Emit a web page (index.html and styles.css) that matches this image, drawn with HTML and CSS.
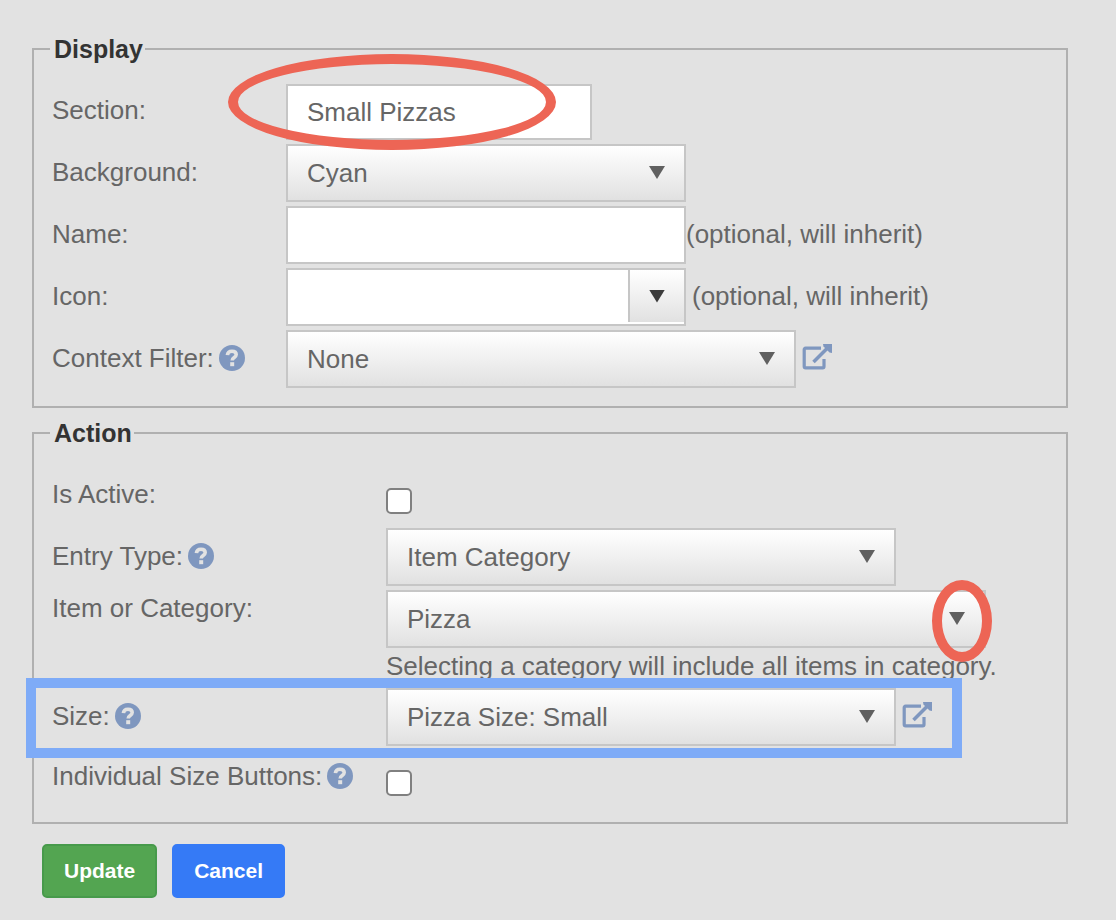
FILE: index.html
```html
<!DOCTYPE html>
<html lang="en">
<head>
<meta charset="utf-8">
<title>Menu Entry</title>
<link rel="stylesheet" href="styles.css">
</head>
<body>
<svg class="defs" aria-hidden="true">
  <symbol id="help" viewBox="0 0 26 26">
    <circle cx="13" cy="13" r="13" fill="currentColor"/>
    <path d="M8.400 10.200C8.600 7.600 10.500 6.200 13 6.200c2.600 0 4.200 1.400 4.200 3.400 0 2.900-4 2.900-4 5.800" fill="none" stroke="#e2e2e2" stroke-width="3.600"/>
    <rect x="11.200" y="17.200" width="4" height="4" fill="#e2e2e2"/>
  </symbol>
  <symbol id="open" viewBox="0 0 30 30">
    <path d="M19 4.200H3.600Q2.200 4.200 2.200 5.600V22.400Q2.200 23.800 3.600 23.800H20.600Q22 23.800 22 22.400V15" fill="none" stroke="currentColor" stroke-width="3.200"/>
    <path d="M11.500 18L26 3.500" fill="none" stroke="currentColor" stroke-width="3.600"/>
    <path d="M21 0H30V9L27.500 8.500 21.500 2.500z" fill="currentColor"/>
  </symbol>
</svg>
<form class="editor">
  <fieldset class="group">
    <legend>Display</legend>
    <div class="row">
      <div class="row-label"><label for="section">Section:</label></div>
      <div class="row-field row-field--low">
        <input class="box box--short" id="section" type="text" value="Small Pizzas">
        <span class="mark mark--section"></span>
      </div>
    </div>
    <div class="row">
      <div class="row-label"><label for="background">Background:</label></div>
      <div class="row-field">
        <span class="select select--medium"><select class="box" id="background"><option>Cyan</option></select></span>
      </div>
    </div>
    <div class="row">
      <div class="row-label"><label for="name">Name:</label></div>
      <div class="row-field">
        <input class="box box--medium" id="name" type="text">
        <span class="hint">(optional, will inherit)</span>
      </div>
    </div>
    <div class="row">
      <div class="row-label"><label for="icon">Icon:</label></div>
      <div class="row-field row-field--spaced">
        <span class="combo">
          <input id="icon" type="text">
          <button type="button" aria-label="Choose icon"></button>
        </span>
        <span class="hint">(optional, will inherit)</span>
      </div>
    </div>
    <div class="row">
      <div class="row-label"><label for="filter">Context Filter:</label><svg class="help"><use href="#help"/></svg></div>
      <div class="row-field row-field--spaced">
        <span class="select select--long"><select class="box" id="filter"><option>None</option></select></span>
        <a class="open" href="#filter" aria-label="Open context filter"><svg><use href="#open"/></svg></a>
      </div>
    </div>
  </fieldset>

  <fieldset class="group group--wide">
    <legend>Action</legend>
    <div class="row">
      <div class="row-label"><label for="active">Is Active:</label></div>
      <div class="row-field row-field--check"><input class="check" id="active" type="checkbox"></div>
    </div>
    <div class="row">
      <div class="row-label"><label for="type">Entry Type:</label><svg class="help"><use href="#help"/></svg></div>
      <div class="row-field">
        <span class="select select--long"><select class="box" id="type"><option>Item Category</option></select></span>
      </div>
    </div>
    <div class="row row--top">
      <div class="row-label"><label for="item">Item or Category:</label></div>
      <div class="row-stack">
        <span class="select select--full">
          <select class="box" id="item"><option>Pizza</option></select>
          <span class="mark mark--item"></span>
        </span>
        <span class="note">Selecting a category will include all items in category.</span>
      </div>
    </div>
    <div class="row row--marked">
      <div class="row-label"><label for="size">Size:</label><svg class="help"><use href="#help"/></svg></div>
      <div class="row-field row-field--spaced">
        <span class="select select--long"><select class="box" id="size"><option>Pizza Size: Small</option></select></span>
        <a class="open" href="#size" aria-label="Open size"><svg><use href="#open"/></svg></a>
      </div>
    </div>
    <div class="row row--last">
      <div class="row-label"><label for="individual">Individual Size Buttons:</label><svg class="help"><use href="#help"/></svg></div>
      <div class="row-field row-field--check"><input class="check" id="individual" type="checkbox"></div>
    </div>
  </fieldset>

  <div class="actions">
    <button class="button button--update" type="submit">Update</button>
    <button class="button button--cancel" type="button">Cancel</button>
  </div>
</form>
</body>
</html>
```

FILE: styles.css
```css
*, *::before, *::after { box-sizing: border-box; }

body {
  margin: 0;
  background: #e2e2e2;
  color: #666;
  font: 26px/30px "Liberation Sans", Arial, sans-serif;
}

input, select, button { font: inherit; color: inherit; border-radius: 0; }

.defs { position: absolute; width: 0; height: 0; }

.editor { padding: 34px 48px 22px 32px; }

.group {
  --label: 234px;
  display: flex;
  flex-direction: column;
  gap: 4px;
  margin: 0 0 10px;
  padding: 18px;
  border: 2px solid #b0b0b0;
  min-width: 0;
}
.group--wide { --label: 334px; margin-bottom: 20px; }

legend {
  padding: 0 2px 0 4px;
  margin-left: -2px;
  color: #333;
  font-size: 25px;
  font-weight: bold;
}

.row {
  position: relative;
  display: grid;
  grid-template-columns: var(--label) minmax(0, 1fr);
  align-items: center;
  min-height: 58px;
  white-space: nowrap;
}
.row--top { align-items: start; }
.row--top .row-label { padding-top: 3px; }
.row--last { min-height: 54px; }

.row-label, .row-field { display: flex; align-items: center; }
.row-label, .hint { padding-bottom: 2px; }
.row-field { position: relative; }
.row-field--low { align-self: end; }
.row-field--spaced { gap: 6px; }
.row-field--check { padding-top: 12px; }
.row-stack { display: flex; flex-direction: column; }

.box {
  width: 100%;
  height: 58px;
  margin: 0;
  padding: 0 19px;
  border: 2px solid #c6c6c6;
  background: #fff;
}
.box--short { width: 306px; height: 56px; }
.box--medium { width: 400px; }

.select { position: relative; display: block; }
.select--medium { width: 400px; }
.select--long { width: 510px; }
.select--full { width: 600px; }
.select .box {
  display: block;
  appearance: none;
  background: linear-gradient(#fff, #e1e1e1);
}
.select::after, .combo button::after {
  content: "";
  width: 16px;
  height: 13px;
  background: #606060;
  clip-path: polygon(0 0, 100% 0, 50% 100%);
}
.select::after {
  position: absolute;
  right: 21px;
  top: 22px;
  pointer-events: none;
}

.combo {
  display: flex;
  width: 400px;
  height: 58px;
  padding-bottom: 2px;
  border: 2px solid #c6c6c6;
  background: #fff;
}
.combo input { flex: 1; min-width: 0; padding: 0 19px; border: 0; background: none; }
.combo button {
  display: flex;
  align-items: center;
  justify-content: center;
  width: 56px;
  padding: 0;
  border: 0;
  border-left: 2px solid #c6c6c6;
  background: linear-gradient(#fff, #e1e1e1);
}
.combo button::after { background: #3c3c3c; }

.help { width: 26px; height: 26px; margin-left: 5px; color: #7f97bf; }
.open { display: flex; color: #7f97bf; }
.open svg { width: 30px; height: 30px; }

.check {
  appearance: none;
  width: 26px;
  height: 26px;
  margin: 0;
  border: 2px solid #808080;
  border-radius: 5px;
  background: #fff;
}

.note { line-height: 36px; }

.mark {
  position: absolute;
  z-index: 1;
  border: 10px solid #ed6555;
  border-radius: 50%;
  pointer-events: none;
}
.mark--section { left: -58px; top: -30px; width: 328px; height: 96px; }
.mark--item { right: -6px; top: -10px; width: 60px; height: 82px; }

.row--marked::after {
  content: "";
  position: absolute;
  left: -26px;
  top: -10px;
  width: 936px;
  height: 80px;
  border: 10px solid #7eabf7;
  pointer-events: none;
}

.actions { display: flex; gap: 15px; padding-left: 10px; }
.button {
  height: 54px;
  padding: 0 20px;
  border: 2px solid;
  border-radius: 5px;
  color: #fff;
  font-size: 21px;
  font-weight: bold;
}
.button--update { background: #53a551; border-color: #479a4b; }
.button--cancel { background: #357af6; border-color: #357af6; }
```
